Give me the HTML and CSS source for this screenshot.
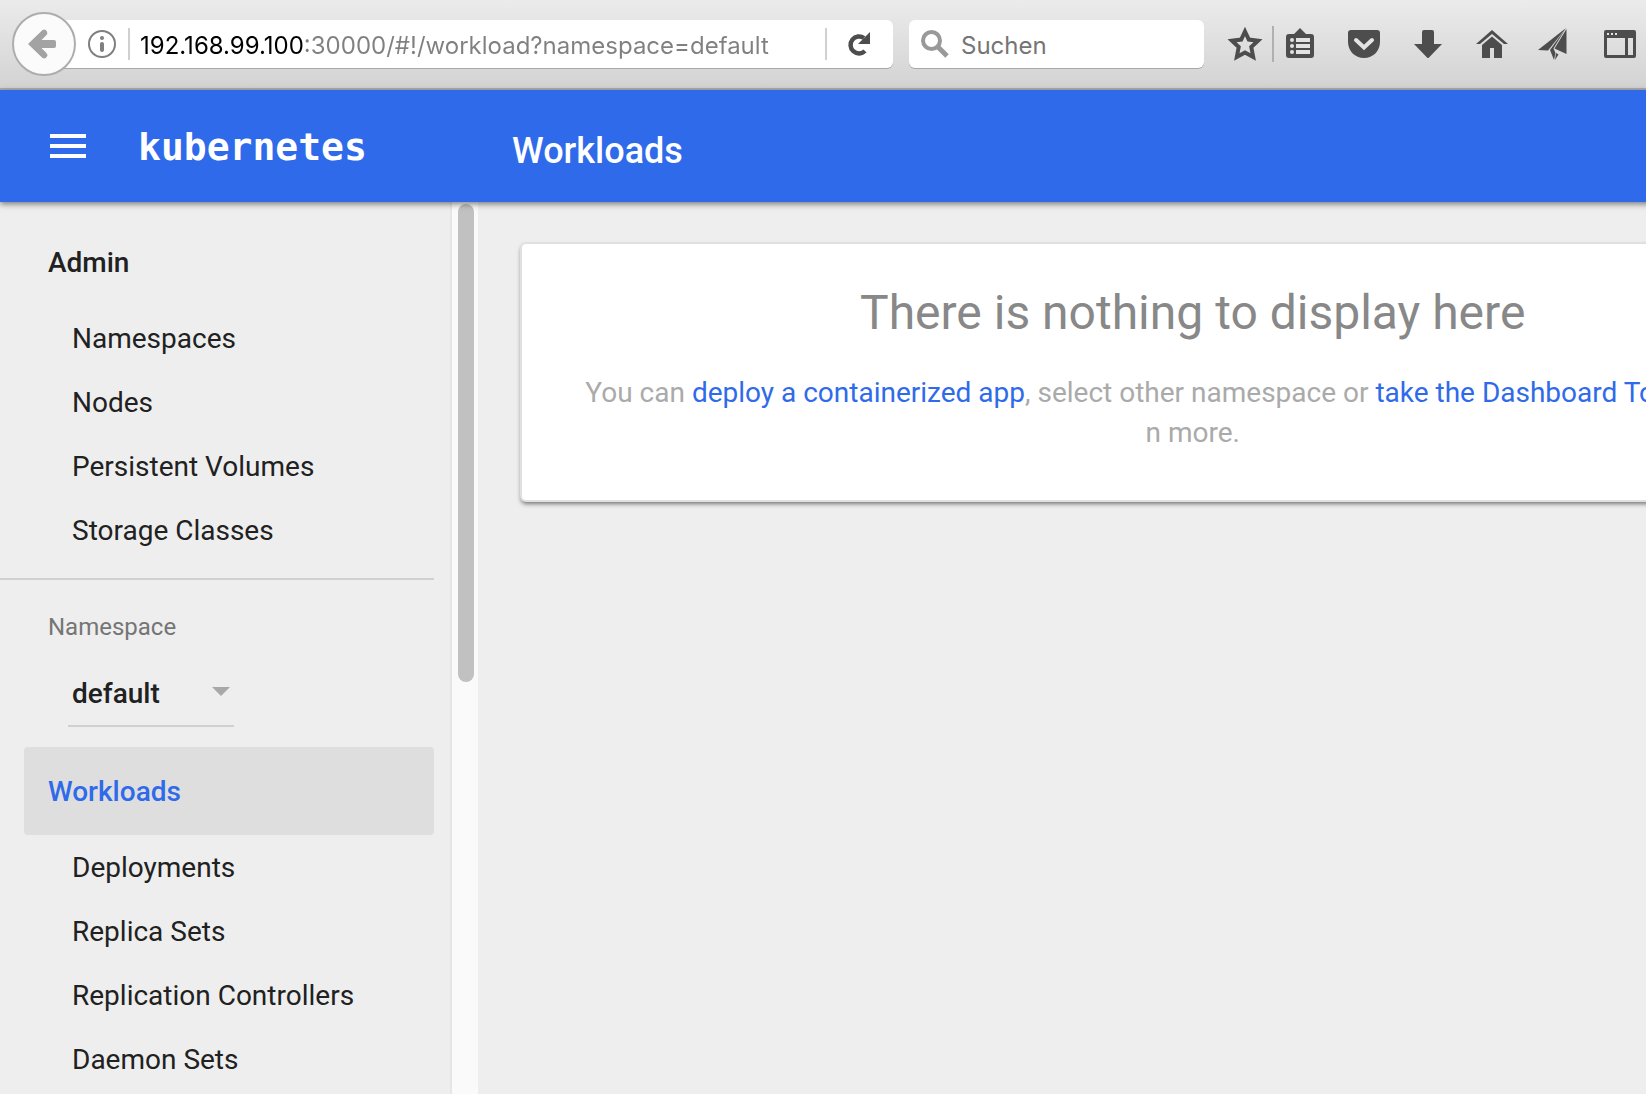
FILE: index.html
```html
<!DOCTYPE html>
<html lang="en">
<head>
<meta charset="utf-8">
<title>Kubernetes Dashboard</title>
<link rel="stylesheet" href="styles.css">
</head>
<body>
<div class="toolbar">
  <button class="back" type="button" aria-label="Back">
    <svg width="28" height="32" viewBox="0 0 28 32"><path d="M0 16L14 2.500Q17 0 19 3.500Q20 5.500 18 7.500L13.500 12H26Q28 12 28 14V18Q28 20 26 20H13.500L18 24.500Q20 26.500 19 28.500Q17 32 14 29.500Z" fill="#a3a3a3"/></svg>
  </button>
  <div class="urlbar">
    <svg class="info" width="28" height="28" viewBox="0 0 28 28"><circle cx="14" cy="14" r="13" fill="none" stroke="#7f7f7f" stroke-width="2"/><circle cx="14" cy="8" r="2" fill="#7f7f7f"/><rect x="12" y="12" width="4" height="10" rx="2" fill="#7f7f7f"/></svg>
    <span class="rule"></span>
    <input class="url" type="text" aria-label="Address" value="192.168.99.100:30000/#!/workload?namespace=default">
    <span class="rule"></span>
    <button class="reload" type="button" aria-label="Reload">
      <svg width="24" height="24" viewBox="0 0 24 24"><path d="M18 19A8.500 8.500 0 1 1 17 6" fill="none" stroke="#4d4d4d" stroke-width="4.500"/><path d="M23 0V12H11Z" fill="#4d4d4d"/></svg>
    </button>
  </div>
  <div class="search">
    <svg width="28" height="28" viewBox="0 0 28 28"><circle cx="10.500" cy="10.500" r="8.500" fill="none" stroke="#999" stroke-width="4"/><path d="M16 16L26 26" stroke="#999" stroke-width="5"/></svg>
    <input class="search-input" type="text" aria-label="Suchen" placeholder="Suchen">
  </div>
  <div class="tools">
    <button type="button" aria-label="Bookmark"><svg width="32" height="32" viewBox="0 0 32 32"><path d="M16 3.500L19.800 11.600L29 12.800L22.300 19L24.200 29L16 24.600L7.800 29L9.700 19L3 12.800L12.200 11.600Z" fill="none" stroke="#4d4d4d" stroke-width="4"/></svg></button>
    <span class="divider"></span>
    <button type="button" aria-label="Bookmarks list"><svg width="32" height="32" viewBox="0 0 32 32"><path d="M10 6L16 0L22 6H27Q30 6 30 9V27Q30 30 27 30H5Q2 30 2 27V9Q2 6 5 6Z" fill="#4d4d4d"/><g fill="#e2e2e2"><circle cx="8" cy="12" r="2"/><circle cx="8" cy="18" r="2"/><circle cx="8" cy="24" r="2"/><rect x="12" y="10" width="14" height="4"/><rect x="12" y="16" width="14" height="4"/><rect x="12" y="22" width="14" height="4"/></g></svg></button>
    <button type="button" aria-label="Pocket"><svg width="32" height="32" viewBox="0 0 32 32"><path d="M3 2H29Q32 2 32 5V14C32 23 25 30 16 30S0 23 0 14V5Q0 2 3 2Z" fill="#4d4d4d"/><path d="M8 12L16 19.500L24 12" fill="none" stroke="#e4e4e4" stroke-width="4" stroke-linecap="round"/></svg></button>
    <button type="button" aria-label="Downloads"><svg width="32" height="32" viewBox="0 0 32 32"><path d="M12 2H20Q22 2 22 4V16H30L17 29.500Q16 30.500 15 29.500L2 16H10V4Q10 2 12 2Z" fill="#4d4d4d"/></svg></button>
    <button type="button" aria-label="Home"><svg width="32" height="32" viewBox="0 0 32 32"><path d="M16 2L32 16H28L16 6L4 16H0Z" fill="#4d4d4d"/><path d="M16 8.500L26 17V30H18V20H14V30H6V17Z" fill="#4d4d4d"/></svg></button>
    <button type="button" aria-label="Share"><svg width="32" height="32" viewBox="0 0 32 32"><path d="M26 0L-2 22L8 22.500Z" fill="#4d4d4d"/><path d="M26 0L10 22L14 32L15.500 25L13.500 20.500Z" fill="#4d4d4d"/><path d="M26.500 1L14.500 20.500L26.500 26Z" fill="#4d4d4d"/><path d="M16 25L18.500 26.500L15 32Z" fill="#4d4d4d"/></svg></button>
    <button type="button" aria-label="Sidebar"><svg width="32" height="32" viewBox="0 0 32 32"><path fill-rule="evenodd" d="M2 2H30Q32 2 32 4V28Q32 30 30 30H2Q0 30 0 28V4Q0 2 2 2ZM3 10V27H21V10ZM24 10V27H29V10Z" fill="#4d4d4d"/><path d="M3 5H5V7H3ZM7 5H9V7H7ZM11 5H13V7H11Z" fill="#e4e4e4"/></svg></button>
  </div>
</div>

<div class="app">
  <header class="header">
    <button class="menu" type="button" aria-label="Menu"><svg width="36" height="24" viewBox="0 0 36 24"><path d="M0 0H36V4H0ZM0 10H36V14H0ZM0 20H36V24H0Z" fill="#fff"/></svg></button>
    <a class="logo" href="#">kubernetes</a>
    <h1 class="page-title">Workloads</h1>
  </header>
  <div class="body">
    <aside class="sidebar">
      <nav class="nav">
        <a class="group" href="#">Admin</a>
        <a class="item" href="#">Namespaces</a>
        <a class="item" href="#">Nodes</a>
        <a class="item" href="#">Persistent Volumes</a>
        <a class="item" href="#">Storage Classes</a>
        <hr class="separator">
        <label class="ns-label" for="namespace">Namespace</label>
        <div class="ns-field">
          <select class="ns-select" id="namespace"><option>default</option></select>
          <span class="ns-arrow"></span>
        </div>
        <a class="group active" href="#">Workloads</a>
        <a class="item" href="#">Deployments</a>
        <a class="item" href="#">Replica Sets</a>
        <a class="item" href="#">Replication Controllers</a>
        <a class="item" href="#">Daemon Sets</a>
      </nav>
      <div class="scrollbar"><div class="thumb"></div></div>
    </aside>
    <main class="main">
      <section class="card">
        <h2 class="card-title">There is nothing to display here</h2>
        <p class="card-text">You can <a href="#">deploy a containerized app</a>, select other namespace or <a href="#">take the Dashboard Tour <svg class="open-icon" width="28" height="28" viewBox="0 0 24 24"><path d="M19 19H5V5h7V3H3v18h18v-9h-2zM14 3v2h3.600l-9.800 9.800 1.400 1.400L19 6.400V10h2V3z" fill="currentColor"/></svg></a> to lear<br>n more.</p>
      </section>
    </main>
  </div>
</div>
</body>
</html>
```
FILE: styles.css
```css
* { box-sizing: border-box; }

body {
  margin: 0;
  height: 100vh;
  display: flex;
  flex-direction: column;
  overflow: hidden;
  background: #eee;
  color: #212121;
  font-family: Roboto, sans-serif;
  font-size: 28px;
}

button {
  margin: 0;
  padding: 0;
  border: 0;
  background: none;
}

svg { display: block; overflow: visible; }
a { text-decoration: none; color: inherit; }

/* Browser toolbar */
.toolbar {
  flex: none;
  display: flex;
  align-items: center;
  height: 90px;
  padding: 0 10px 0 12px;
  border-bottom: 2px solid #aeaeae;
  background: linear-gradient(#ebebeb, #d3d3d3);
}

.back {
  z-index: 1;
  flex: none;
  display: flex;
  align-items: center;
  justify-content: center;
  width: 64px;
  height: 64px;
  padding-right: 4px;
  border: 2px solid #adadad;
  border-radius: 50%;
  background: #fbfbfb;
}

.urlbar,
.search {
  display: flex;
  align-items: center;
  height: 48px;
  border-radius: 6px;
  background: #fff;
  box-shadow: 0 1px 0 #a8a8a8;
}

.urlbar {
  flex: 1;
  min-width: 0;
  margin-left: -32px;
  padding-left: 44px;
}

.info { flex: none; margin-right: 12px; }
.rule { flex: none; width: 2px; height: 32px; background: #d0d0d0; }

.url,
.search-input {
  flex: 1;
  min-width: 0;
  padding: 2px 0 0;
  border: 0;
  outline: 0;
  background: none;
  font-family: Inter, sans-serif;
  font-size: 24px;
}

/* The host is black and the rest of the address is grey */
.url {
  margin: 0 52px 0 10px;
  background: linear-gradient(to right, #000 164px, #808080 164px);
  background-clip: text;
  -webkit-background-clip: text;
  -webkit-text-fill-color: transparent;
}

.reload { flex: none; padding: 0 22px 0 20px; }

.search {
  flex: none;
  width: 295px;
  margin-left: 16px;
  padding: 0 12px;
  gap: 12px;
}

.search-input::placeholder { color: #757575; opacity: 1; }

.tools {
  flex: none;
  display: flex;
  align-items: center;
  gap: 32px;
  margin-left: 25px;
}

.divider { width: 2px; height: 36px; margin: 0 -22px 0 -21px; background: #b0b0b0; }

/* Dashboard, wider than the visible part of the window */
.app {
  flex: 1;
  min-height: 0;
  display: flex;
  flex-direction: column;
  width: 116vw;
}

.header {
  z-index: 1;
  flex: none;
  display: flex;
  align-items: center;
  height: 112px;
  padding-left: 50px;
  background: #2f6aea;
  color: #fff;
  box-shadow: 0 2px 6px rgba(0, 0, 0, 0.5);
}

.logo {
  width: 374px;
  margin-left: 52px;
  padding-top: 2px;
  font-family: "DejaVu Sans Mono", monospace;
  font-weight: 700;
  font-size: 38px;
}

.page-title { margin: 10px 0 0; font-size: 36px; font-weight: 500; }

.body { flex: 1; min-height: 0; display: flex; }

.sidebar { flex: none; display: flex; width: 478px; overflow: hidden; }

.nav {
  flex: 1;
  display: flex;
  flex-direction: column;
  padding: 16px 16px 0 0;
}

.group,
.item {
  flex: none;
  display: flex;
  align-items: center;
  height: 64px;
  padding-left: 72px;
}

.group {
  height: 88px;
  margin-left: 24px;
  padding-left: 24px;
  border-radius: 4px;
  font-weight: 500;
}

.active { background: #dedede; color: #2f6aea; }

.separator {
  flex: none;
  width: 100%;
  height: 2px;
  margin: 16px 0 33px;
  border: 0;
  background: #d0d0d0;
}

.ns-label {
  margin-left: 48px;
  color: #757575;
  font-size: 24px;
  line-height: 28px;
}

.ns-field {
  flex: none;
  display: grid;
  align-items: center;
  width: 166px;
  height: 66px;
  margin: 20px 0 20px 68px;
  border-bottom: 2px solid #d0d0d0;
}

.ns-select,
.ns-arrow { grid-area: 1 / 1; }

.ns-select {
  appearance: none;
  padding: 0 0 0 4px;
  border: 0;
  background: none;
  color: #212121;
  font-family: inherit;
  font-size: 28px;
  font-weight: 500;
}

.ns-arrow {
  justify-self: end;
  margin: 0 4px 4px 0;
  border: 9px solid transparent;
  border-top-color: #a8a8a8;
  border-bottom: 0;
  pointer-events: none;
}

.scrollbar {
  width: 28px;
  padding: 2px 4px 0 6px;
  border-left: 2px solid #e6e6e6;
  background: #fafafa;
}

.thumb { height: calc(54% - 3px); border-radius: 8px; background: #c1c1c1; }

/* Content */
.main { flex: 1; min-width: 0; padding: 42px 46px 42px 44px; }

.card {
  padding: 37px 48px 47px;
  border-radius: 4px;
  background: #fff;
  text-align: center;
  box-shadow: 0 0 0 2px #e0e0e0, 0 3px 4px 1px rgba(0, 0, 0, 0.5);
}

.card-title {
  margin: 0;
  color: #888;
  font-size: 48px;
  font-weight: 400;
  line-height: 64px;
}

.card-text {
  margin: 28px 0 0;
  color: #aaa;
  line-height: 40px;
}

.card-text a { color: #2f6aea; }
.open-icon { display: inline-block; vertical-align: middle; }
```
